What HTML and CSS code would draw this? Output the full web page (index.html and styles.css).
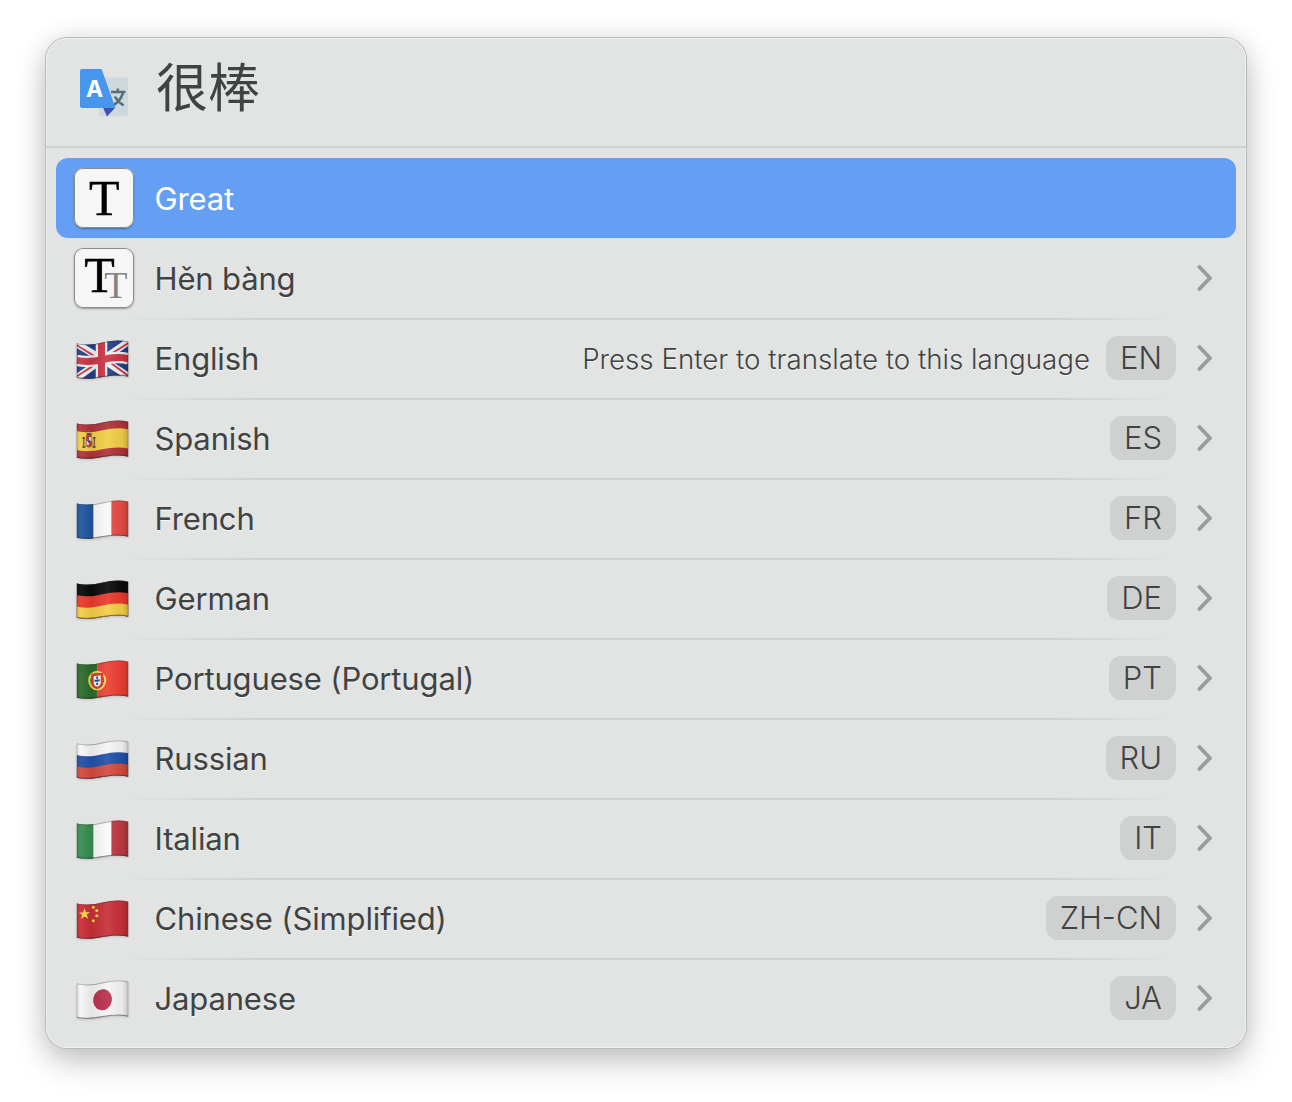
FILE: index.html
```html
<!DOCTYPE html>
<html lang="en">
<head>
<meta charset="utf-8">
<title>Translate</title>
<link rel="stylesheet" href="styles.css">
</head>
<body>
<svg class="defs" width="0" height="0" aria-hidden="true">
  <defs>
    <clipPath id="wave"><path d="M0 3.2C9 5.6 18 4.6 26 2.6C35 .3 44-.2 52 1.7V36.7C44 34.8 35 35.3 26 37C18 38.8 9 39.6 0 37.8Z"/></clipPath>
    <linearGradient id="shade" x1="0" x2="1" y1="0" y2="0">
      <stop offset="0" stop-color="#000" stop-opacity=".12"/>
      <stop offset=".08" stop-color="#fff" stop-opacity=".06"/>
      <stop offset=".28" stop-color="#000" stop-opacity=".07"/>
      <stop offset=".6" stop-color="#fff" stop-opacity=".08"/>
      <stop offset=".88" stop-color="#000" stop-opacity=".05"/>
      <stop offset="1" stop-color="#000" stop-opacity=".2"/>
    </linearGradient>
    <g id="gloss">
      <path fill="url(#shade)" d="M0 0H52V40H0Z"/>
      <path fill="none" stroke="#333" stroke-opacity=".38" stroke-width="1.6" d="M0 3.2C9 5.6 18 4.6 26 2.6C35 .3 44-.2 52 1.7V36.7C44 34.8 35 35.3 26 37C18 38.8 9 39.6 0 37.8Z"/>
      <path fill="none" stroke="#222" stroke-opacity=".35" stroke-width="2" d="M0 37.8C9 39.6 18 38.8 26 37C35 35.3 44 34.8 52 36.7"/>
    </g>
    <path id="low-third" d="M0 26.4C9 28.6 18 27.6 26 25.6C35 23.3 44 22.8 52 24.7V40H0Z"/>
    <path id="low-two" d="M0 15C9 17.2 18 16.2 26 14.2C35 11.9 44 11.4 52 13.3V40H0Z"/>
    <symbol id="chevron" viewBox="0 0 16 28"><path d="M2.4 3L13 14L2.4 25" fill="none" stroke="#9b9d9c" stroke-width="3.9" stroke-linecap="round" stroke-linejoin="round"/></symbol>
  </defs>
</svg>

<main class="window">
  <header class="search">
    <svg class="app-icon" viewBox="0 0 50 50">
      <rect x="20" y="10.5" width="29" height="39" rx="2" fill="#cfd8dc"/>
      <path d="M32 25H46.5M38.8 21.5V25M44 26C42.2 31.5 38.8 35.8 34 38.4M35.8 29.5C38 33.5 40.8 36.2 44.6 38.4" fill="none" stroke="#546e7a" stroke-width="2.5"/>
      <path d="M24 40.5H36.4L28 49.5Z" fill="#3f51b5"/>
      <path d="M3 2H22.6L36.4 41H3Q1 41 1 39V4Q1 2 3 2Z" fill="#4596ec"/>
      <text x="15.5" y="30" class="app-letter">A</text>
    </svg>
    <h1 class="query" lang="zh-CN">很棒</h1>
  </header>

  <ul class="results">
    <li class="row selected">
      <svg class="tile" viewBox="0 0 60 60"><text x="30.3" y="47.3" class="big-t">T</text></svg>
      <span class="label">Great</span>
    </li>
    <li class="row">
      <svg class="tile" viewBox="0 0 60 60"><text x="25.5" y="43.7" class="big-t">T</text><text x="41.8" y="50.3" class="small-t">T</text></svg>
      <span class="label">Hěn bàng</span>
      <svg class="chevron"><use href="#chevron"/></svg>
    </li>
    <li class="row">
      <svg class="flag" viewBox="0 0 52 40">
        <g clip-path="url(#wave)">
          <path fill="#253f86" d="M0 0H52V40H0Z"/>
          <path d="M-1 3L26 19.5L53 37M0 38L26 19.5L53 1" fill="none" stroke="#f0f0f2" stroke-width="7"/>
          <path d="M0 5L24 20M29 19L52 36M0 36.5L24 21M28 18L52 3" fill="none" stroke="#cd3545" stroke-width="2"/>
          <path d="M0 20.3C9 22.3 18 21.3 26 19.7C35 17.3 44 16.8 52 18.8M25 0V40" fill="none" stroke="#f0f0f2" stroke-width="11.5"/>
          <path d="M0 20.3C9 22.3 18 21.3 26 19.7C35 17.3 44 16.8 52 18.8M25 0V40" fill="none" stroke="#cd3545" stroke-width="7"/>
          <use href="#gloss"/>
        </g>
      </svg>
      <span class="label">English</span>
      <span class="hint">Press Enter to translate to this language</span>
      <kbd class="code">EN</kbd>
      <svg class="chevron"><use href="#chevron"/></svg>
    </li>
    <li class="row">
      <svg class="flag" viewBox="0 0 52 40">
        <g clip-path="url(#wave)">
          <path fill="#b0333a" d="M0 0H52V40H0Z"/>
          <path fill="#f3ce46" d="M0 11C9 13.2 18 12.2 26 10.2C35 7.9 44 7.4 52 9.3V28.6C44 26.7 35 27.2 26 29.3C18 31.2 9 32.1 0 30Z"/>
          <path fill="#b5483a" d="M9.5 16Q12.5 11.5 15.5 16L16 25Q12.5 30 9 25Z"/>
          <path d="M7.2 17V27.5M17.8 17V27.5" stroke="#8c6b4c" stroke-width="1.6"/>
          <path d="M6 18H8.4M16.6 18H19M6 27H9M16 27H19M10 14H15" stroke="#46413d" stroke-width="1.3"/>
          <path fill="#ead8bd" d="M12.5 17H15V21H12.5ZM10 21H12.5V25H10Z"/>
          <circle cx="12.5" cy="21.5" r="1.3" fill="#3e4e82"/>
          <use href="#gloss"/>
        </g>
      </svg>
      <span class="label">Spanish</span>
      <kbd class="code">ES</kbd>
      <svg class="chevron"><use href="#chevron"/></svg>
    </li>
    <li class="row">
      <svg class="flag" viewBox="0 0 52 40">
        <g clip-path="url(#wave)">
          <path fill="#2255a0" d="M0 0H17V40H0Z"/><path fill="#fafafa" d="M17 0H35V40H17Z"/><path fill="#e64d45" d="M35 0H52V40H35Z"/>
          <use href="#gloss"/>
        </g>
      </svg>
      <span class="label">French</span>
      <kbd class="code">FR</kbd>
      <svg class="chevron"><use href="#chevron"/></svg>
    </li>
    <li class="row">
      <svg class="flag" viewBox="0 0 52 40">
        <g clip-path="url(#wave)">
          <path fill="#0b0b0b" d="M0 0H52V40H0Z"/><use href="#low-two" fill="#eb3a2c"/><use href="#low-third" fill="#f5ce46"/>
          <use href="#gloss"/>
        </g>
      </svg>
      <span class="label">German</span>
      <kbd class="code">DE</kbd>
      <svg class="chevron"><use href="#chevron"/></svg>
    </li>
    <li class="row">
      <svg class="flag" viewBox="0 0 52 40">
        <g clip-path="url(#wave)">
          <path fill="#2e6b2b" d="M0 0H21V40H0Z"/><path fill="#ec4034" d="M21 0H52V40H21Z"/>
          <ellipse cx="20.7" cy="20.5" rx="8" ry="8.8" fill="#4b7a2c" stroke="#efd64c" stroke-width="2"/>
          <path d="M13.5 17.5L28 23.5M14 24.5L27 15.5" stroke="#efd64c" stroke-width="1"/>
          <path fill="#fff" stroke="#d6382f" stroke-width="2.4" d="M16 15L25.4 14V22.5Q25 27 20.7 27.8Q16.4 27.5 16 22.5Z"/>
          <path d="M20.7 16.5V25M18 20.7L23.5 20.2" stroke="#29468f" stroke-width="2" stroke-dasharray="2.2 .9"/>
          <use href="#gloss"/>
        </g>
      </svg>
      <span class="label">Portuguese (Portugal)</span>
      <kbd class="code">PT</kbd>
      <svg class="chevron"><use href="#chevron"/></svg>
    </li>
    <li class="row">
      <svg class="flag" viewBox="0 0 52 40">
        <g clip-path="url(#wave)">
          <path fill="#f5f5f5" d="M0 0H52V40H0Z"/><use href="#low-two" fill="#2350a8"/><use href="#low-third" fill="#d64a3e"/>
          <use href="#gloss"/>
        </g>
      </svg>
      <span class="label">Russian</span>
      <kbd class="code">RU</kbd>
      <svg class="chevron"><use href="#chevron"/></svg>
    </li>
    <li class="row">
      <svg class="flag" viewBox="0 0 52 40">
        <g clip-path="url(#wave)">
          <path fill="#388e50" d="M0 0H17V40H0Z"/><path fill="#fafafa" d="M17 0H35V40H17Z"/><path fill="#be3a42" d="M35 0H52V40H35Z"/>
          <use href="#gloss"/>
        </g>
      </svg>
      <span class="label">Italian</span>
      <kbd class="code">IT</kbd>
      <svg class="chevron"><use href="#chevron"/></svg>
    </li>
    <li class="row">
      <svg class="flag" viewBox="0 0 52 40">
        <g clip-path="url(#wave)">
          <path fill="#c92f38" d="M0 0H52V40H0Z"/>
          <path fill="#f8d847" d="M8 8.3L9.4 12.3L13.6 12.1L10.3 14.6L11.8 18.8L8 16.4L4.4 19L5.7 14.8L2.5 12.5L6.6 12.4Z"/>
          <g fill="#f8d847"><circle cx="16.8" cy="7.3" r="1.5"/><circle cx="20.3" cy="10.4" r="1.5"/><circle cx="20.3" cy="15.7" r="1.5"/><circle cx="16.8" cy="20.8" r="1.5"/></g>
          <use href="#gloss"/>
        </g>
      </svg>
      <span class="label">Chinese (Simplified)</span>
      <kbd class="code">ZH-CN</kbd>
      <svg class="chevron"><use href="#chevron"/></svg>
    </li>
    <li class="row">
      <svg class="flag" viewBox="0 0 52 40">
        <g clip-path="url(#wave)">
          <path fill="#f5f5f5" d="M0 0H52V40H0Z"/><ellipse cx="26" cy="19.7" rx="9.3" ry="10.6" fill="#ba2f4b" transform="rotate(12 26 19.7)"/>
          <use href="#gloss"/>
        </g>
      </svg>
      <span class="label">Japanese</span>
      <kbd class="code">JA</kbd>
      <svg class="chevron"><use href="#chevron"/></svg>
    </li>
  </ul>
</main>
</body>
</html>
```
FILE: styles.css
```css
* { box-sizing: border-box; }

body {
  margin: 0;
  padding: 38px 46px 0;
  height: 1102px;
  overflow: hidden;
  background: #fff;
  color: #414342;
  font-family: Inter, "Liberation Sans", sans-serif;
}

.defs { position: absolute; }

.window {
  width: 1200px;
  height: 1010px;
  border-radius: 21px;
  background: #e2e4e3;
  box-shadow:
    inset 0 0 0 1px #eef0ef,
    0 0 0 1px #b9bbba,
    0 14px 32px rgba(0, 0, 0, .22),
    0 0 26px rgba(0, 0, 0, .1);
}

.search {
  display: flex;
  height: 110px;
  padding-left: 33px;
  border-bottom: 2px solid #d0d2d1;
}

.app-icon {
  width: 50px;
  height: 50px;
  margin-top: 29px;
}

.app-letter {
  font: 700 23px Inter, sans-serif;
  fill: #fff;
  text-anchor: middle;
}

.query {
  margin: 11px 0 0 27px;
  font: 400 52px/72px "Noto Sans CJK SC", sans-serif;
}

.results {
  margin: 0;
  padding: 10px;
  list-style: none;
}

.row {
  display: flex;
  align-items: center;
  height: 80px;
  padding: 0 23px 0 18px;
}

.row + .row + .row {
  background: linear-gradient(90deg, transparent 64px, #d0d2d1 200px, #d0d2d1 1000px, transparent 1118px) top / 100% 2px no-repeat;
}

.selected {
  border-radius: 12px;
  background: #659ff4;
  color: #fff;
}

.tile {
  flex: none;
  width: 60px;
  height: 60px;
  border-radius: 9px;
  background: #f6f6f6;
  box-shadow: inset 0 0 0 1px #8b8d8c, 0 1px 2px rgba(0, 0, 0, .35);
}

.big-t,
.small-t {
  font-family: "Liberation Serif", serif;
  text-anchor: middle;
}

.big-t {
  font-size: 50px;
  stroke: #000;
  stroke-width: .4px;
}

.small-t {
  font-size: 38px;
  fill: #858585;
}

.flag {
  flex: none;
  width: 53px;
  height: 40px;
  margin: 4px 5px 0 2px;
  filter: drop-shadow(0 1px 1px rgba(0, 0, 0, .15));
}

.label {
  flex: 1;
  margin-left: 20.5px;
  font-size: 31px;
  line-height: 40px;
  padding-top: 2px;
  letter-spacing: -.15px;
  white-space: nowrap;
}

.hint {
  margin-right: 16px;
  padding-top: 2px;
  font-size: 27.7px;
  font-weight: 300;
  white-space: nowrap;
}

.row:not(.selected) .label,
.hint { text-shadow: 0 1px 0 rgba(255, 255, 255, .7); }

.code {
  height: 44px;
  padding: 0 14px;
  border-radius: 12px;
  background: #cfd1d0;
  font: 300 31px/44px Inter, sans-serif;
}

.chevron {
  flex: none;
  width: 16px;
  height: 28px;
  margin-left: 21px;
}
```
